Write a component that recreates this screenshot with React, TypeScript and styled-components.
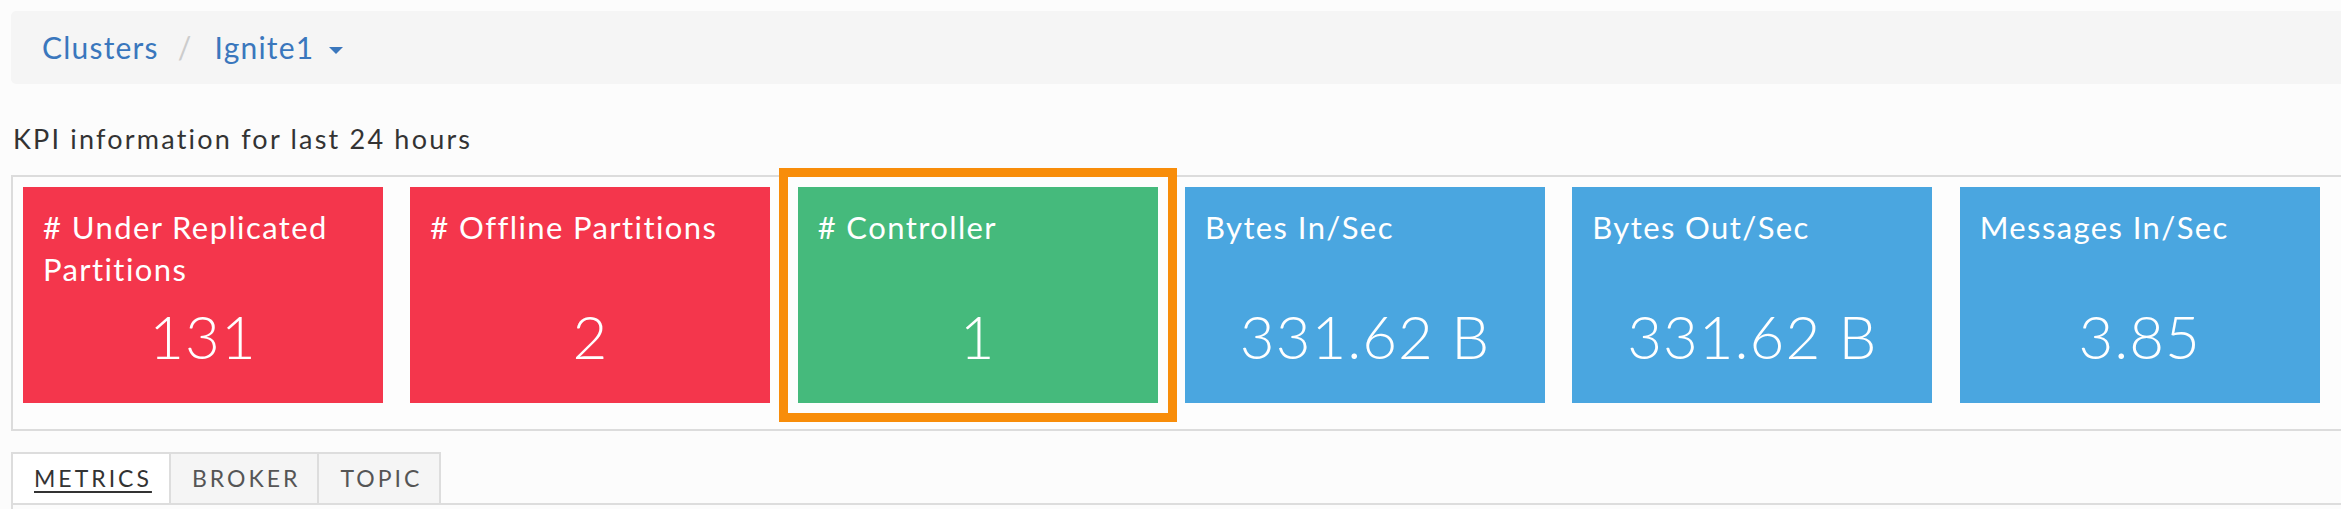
import React from 'react';
import styled, { createGlobalStyle } from 'styled-components';

const Global = createGlobalStyle`
  html, body {
    margin: 0;
    padding: 0;
    background: #fcfcfc;
    overflow: hidden;
  }
  body {
    font-family: Lato, "Open Sans", "Liberation Sans", sans-serif;
    color: #333;
  }
  * { box-sizing: border-box; }
`;

const Page = styled.div`
  width: 2420px;
  padding: 11px 0 0 11px;
`;

const Breadcrumb = styled.nav`
  display: flex;
  align-items: center;
  height: 73px;
  background: #f5f5f5;
  border-radius: 5px;
  padding: 0 0 2px 31px;
  font-size: 30px;
  letter-spacing: 1.2px;
`;

const Crumb = styled.a`
  display: inline-flex;
  align-items: center;
  color: #3a77bd;
  text-decoration: none;
`;

const Sep = styled.span`
  color: #cccccc;
  padding: 0 22px 0 19px;
`;

const Caret = styled.span`
  display: inline-block;
  width: 0;
  height: 0;
  border-top: 7px solid #3a77bd;
  border-left: 7px solid transparent;
  border-right: 7px solid transparent;
  margin-left: 15px;
  margin-top: 8px;
`;

const Heading = styled.div`
  margin: 37px 0 18px 2px;
  font-size: 27px;
  line-height: 36px;
  letter-spacing: 2.2px;
  color: #333;
`;

const KpiBox = styled.section`
  display: grid;
  grid-template-columns: repeat(6, 387.33px);
  border: 2px solid #dcdcdc;
  background: #fdfdfd;
  padding: 10px 0 26px;
`;

const Cell = styled.div`
  padding-left: 10px;
`;

const Card = styled.div<{ $color: string; $highlight?: boolean }>`
  display: flex;
  flex-direction: column;
  width: 360px;
  height: 216px;
  padding: 19px 20px 0;
  background: ${(p) => p.$color};
  color: #fff;
  ${(p) => (p.$highlight ? 'outline: 9px solid #f88d0a; outline-offset: 10px;' : '')}
`;

const CardTitle = styled.div`
  height: 84px;
  font-size: 31px;
  line-height: 42px;
  letter-spacing: 1.4px;
`;

const CardValue = styled.div`
  margin-top: 10px;
  font-size: 60px;
  line-height: 72px;
  font-weight: 300;
  text-align: center;
  letter-spacing: 1px;
`;

const Tabs = styled.div`
  display: flex;
  margin-top: 21px;
`;

const Tab = styled.div<{ $active?: boolean }>`
  height: 51px;
  padding: 0 17px 0 21px;
  margin-right: -2px;
  border: 2px solid #dddddd;
  border-bottom: none;
  background: ${(p) => (p.$active ? '#ffffff' : '#f5f5f5')};
  color: ${(p) => (p.$active ? '#333' : '#555')};
  font-size: 23px;
  line-height: 49px;
  letter-spacing: 3px;
  text-transform: uppercase;
`;

const TabLabel = styled.span<{ $active?: boolean }>`
  text-decoration: ${(p) => (p.$active ? 'underline' : 'none')};
  text-decoration-thickness: 2px;
  text-underline-offset: 4px;
`;

const Panel = styled.div`
  height: 40px;
  border: 2px solid #dddddd;
  border-bottom: none;
  background: #fcfcfc;
`;

const kpis = [
  { title: '# Under Replicated Partitions', value: '131', color: '#f4364c' },
  { title: '# Offline Partitions', value: '2', color: '#f4364c' },
  { title: '# Controller', value: '1', color: '#45ba7c', highlight: true },
  { title: 'Bytes In/Sec', value: '331.62 B', color: '#4aa6e0' },
  { title: 'Bytes Out/Sec', value: '331.62 B', color: '#4aa6e0' },
  { title: 'Messages In/Sec', value: '3.85', color: '#4aa6e0' },
];

export default function App() {
  return (
    <>
      <Global />
      <Page>
        <Breadcrumb>
          <Crumb href="#">Clusters</Crumb>
          <Sep>/</Sep>
          <Crumb href="#">
            Ignite1
            <Caret />
          </Crumb>
        </Breadcrumb>
        <Heading>KPI information for last 24 hours</Heading>
        <KpiBox>
          {kpis.map((k) => (
            <Cell key={k.title}>
              <Card $color={k.color} $highlight={k.highlight}>
                <CardTitle>{k.title}</CardTitle>
                <CardValue>{k.value}</CardValue>
              </Card>
            </Cell>
          ))}
        </KpiBox>
        <Tabs>
          <Tab $active>
            <TabLabel $active>Metrics</TabLabel>
          </Tab>
          <Tab>
            <TabLabel>Broker</TabLabel>
          </Tab>
          <Tab>
            <TabLabel>Topic</TabLabel>
          </Tab>
        </Tabs>
        <Panel />
      </Page>
    </>
  );
}
